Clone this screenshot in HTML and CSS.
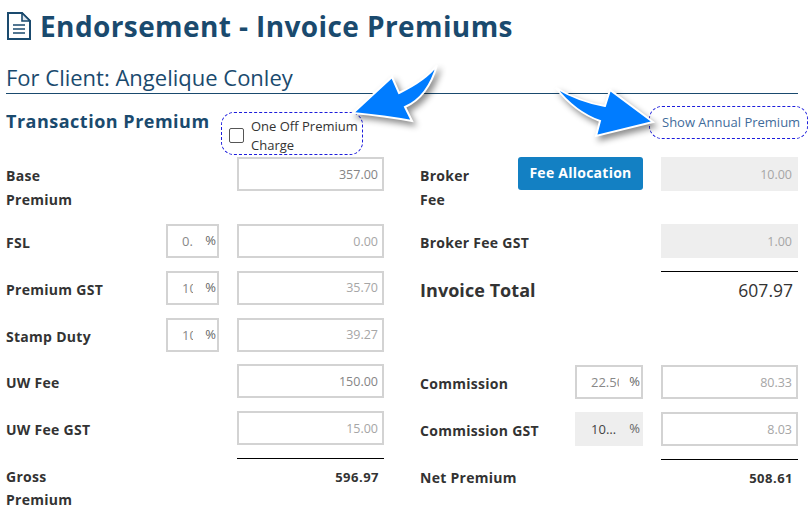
FILE: index.html
```html
<!doctype html>
<html>
<head>
    <meta charset="utf-8">
    <title>Endorsement - Invoice Premiums</title>
    <link rel="stylesheet" href="styles.css">
</head>

<body>
<div class="page">
    <h1 class="page-title">
        <svg class="doc-icon" width="24" height="28" viewBox="0 0 24 28">
            <path d="M1 1H15L23 9V27H1Z" fill="none" stroke="#1a4a6e" stroke-width="2"/>
            <path d="M15 1V9H23Z" fill="#dfe7ee" stroke="#1a4a6e" stroke-width="1.6"/>
            <path d="M6 13H18M6 17H18M6 21H18" stroke="#1a4a6e" stroke-width="1.6"/>
        </svg>
        Endorsement - Invoice Premiums
    </h1>
    <h2 class="client">For Client: Angelique Conley</h2>

    <div class="columns">
        <!-- left column -->
        <div class="col">
            <div class="section-head">
                <h3 class="section-title">Transaction Premium</h3>
                <label class="one-off">
                    <input type="checkbox" class="one-off-check">
                    <span class="one-off-text">One Off Premium Charge</span>
                </label>
            </div>

            <div class="row row-tall">
                <span class="label label-wrap">Base Premium</span>
                <input class="amount strong" value="357.00" readonly>
            </div>
            <div class="row">
                <span class="label">FSL</span>
                <span class="pct"><input value="0.00" readonly><i>%</i></span>
                <input class="amount" value="0.00" readonly>
            </div>
            <div class="row">
                <span class="label">Premium GST</span>
                <span class="pct"><input value="10.00" readonly><i>%</i></span>
                <input class="amount" value="35.70" readonly>
            </div>
            <div class="row">
                <span class="label">Stamp Duty</span>
                <span class="pct"><input value="10.00" readonly><i>%</i></span>
                <input class="amount" value="39.27" readonly>
            </div>
            <div class="row">
                <span class="label">UW Fee</span>
                <input class="amount strong" value="150.00" readonly>
            </div>
            <div class="row">
                <span class="label">UW Fee GST</span>
                <input class="amount" value="15.00" readonly>
            </div>
            <div class="row row-sum">
                <span class="label label-wrap">Gross Premium</span>
                <span class="sum">596.97</span>
            </div>
        </div>

        <!-- right column -->
        <div class="col col-right">
            <div class="section-head section-head-right">
                <a class="annual" href="#">Show Annual Premium</a>
            </div>

            <div class="row row-tall">
                <span class="label label-wrap">Broker Fee</span>
                <button class="fee-btn">Fee Allocation</button>
                <input class="amount disabled" value="10.00" readonly>
            </div>
            <div class="row">
                <span class="label">Broker Fee GST</span>
                <input class="amount disabled" value="1.00" readonly>
            </div>
            <div class="row row-total">
                <span class="total-label">Invoice Total</span>
                <span class="total-value">607.97</span>
            </div>
            <div class="row">
                <span class="label">Commission</span>
                <span class="pct"><input value="22.500" readonly><i>%</i></span>
                <input class="amount" value="80.33" readonly>
            </div>
            <div class="row">
                <span class="label">Commission GST</span>
                <span class="pct pct-disabled"><input value="10.000000" readonly><i>%</i></span>
                <input class="amount" value="8.03" readonly>
            </div>
            <div class="row row-sum">
                <span class="label">Net Premium</span>
                <span class="sum">508.61</span>
            </div>
        </div>
    </div>
</div>

<!-- callout arrows drawn over the page -->
<svg class="arrows" width="812" height="510" viewBox="0 0 812 510">
    <path class="arrow" d="M437 65Q426 80 399 93L392 77L353 113Q385 116 412 121L405 107Q428 97 437 65Z"/>
    <path class="arrow" d="M556 88Q580 102 605 106L610 90L653 122L596 136L600 121Q575 112 556 88Z"/>
</svg>
</body>
</html>
```

FILE: styles.css
```css
html, body {
    margin: 0;
    height: 100%;
    overflow: hidden;
    background: #fff;
}

body {
    font-family: "Open Sans", sans-serif;
    color: #333;
}

.page {
    padding: 0 14px 0 6px;
}

/* headings */
.page-title {
    display: flex;
    align-items: center;
    gap: 9px;
    height: 52px;
    margin: 0;
    font-size: 28px;
    font-weight: 700;
    color: #1a4a6e;
    letter-spacing: 0.4px;
}

.doc-icon {
    margin-left: 1px;
    flex: none;
}

.client {
    margin: 10px 0 0;
    height: 31px;
    line-height: 30px;
    font-size: 22px;
    font-weight: 400;
    color: #1a4a6e;
    border-bottom: 1px solid #1a4a6e;
}

/* two columns */
.columns {
    display: grid;
    grid-template-columns: 378px 378px;
    column-gap: 36px;
}

.section-head {
    display: flex;
    align-items: flex-start;
    height: 63px;
}

.section-head-right {
    justify-content: flex-end;
}

.section-title {
    margin: 15px 0 0;
    width: 215px;
    flex: none;
    font-size: 18px;
    line-height: 24px;
    font-weight: 700;
    color: #1a4a6e;
    letter-spacing: 0.5px;
}

.one-off {
    box-sizing: border-box;
    display: flex;
    align-items: center;
    width: 142px;
    height: 43px;
    margin-top: 18px;
    padding: 0 0 0 7px;
    border: 1px dashed #1c1cdc;
    border-radius: 13px;
    font-size: 13px;
    line-height: 19px;
}

.one-off-text {
    padding-top: 4px;
}

.one-off-check {
    appearance: none;
    flex: none;
    width: 15px;
    height: 15px;
    margin: 4px 7px 0 0;
    border: 1px solid #555;
    border-radius: 2px;
}

.annual {
    box-sizing: border-box;
    flex: none;
    width: 159px;
    height: 33px;
    margin: 12px -10px 0 0;
    padding-left: 12px;
    border: 1px dashed #1c1cdc;
    border-radius: 13px;
    font-size: 13px;
    line-height: 30px;
    color: #3f6c9c;
    text-decoration: none;
}

/* form rows */
.row {
    display: flex;
    align-items: flex-start;
    height: 34px;
    margin-bottom: 12.8px;
}

.row-tall {
    height: 54px;
    margin-bottom: 13px;
}

.label {
    padding-top: 7px;
    margin-right: auto;
    font-size: 14px;
    line-height: 24px;
    font-weight: 700;
    letter-spacing: 0.28px;
}

.label-wrap {
    width: 70px;
}

input {
    font-family: inherit;
    outline: 0;
}

.amount {
    box-sizing: border-box;
    flex: none;
    width: 147px;
    height: 34px;
    padding: 0 4px 0 0;
    border: 2px solid #d3d3d3;
    font-size: 12.5px;
    text-align: right;
    color: #a6a6a6;
    background: #fff;
}

.col-right .amount {
    width: 137px;
}

.amount.strong {
    color: #858585;
}

.amount.disabled {
    border-color: #eee;
    background: #eee;
}

.pct {
    position: relative;
    flex: none;
    width: 53px;
    height: 34px;
    margin-right: 18px;
}

.col-right .pct {
    width: 68px;
}

.pct input {
    box-sizing: border-box;
    width: 100%;
    height: 34px;
    padding: 0 24px 0 14px;
    border: 2px solid #d3d3d3;
    font-size: 13px;
    color: #888;
}

.col-right .pct input {
    padding-right: 22px;
}

.pct i {
    position: absolute;
    top: 8px;
    right: 3px;
    font-style: normal;
    font-size: 13px;
    line-height: 16px;
    color: #666;
}

.pct-disabled input {
    border-color: #eee;
    background: #eee;
    color: #444;
    text-overflow: ellipsis;
}

.fee-btn {
    flex: none;
    width: 125px;
    height: 33px;
    margin-right: 18px;
    padding: 0 0 2px;
    border: 0;
    border-radius: 3px;
    background: #1380c3;
    color: #fff;
    font-family: inherit;
    font-size: 14px;
    font-weight: 700;
    letter-spacing: 0.25px;
}

.row-total {
    height: 94.6px;
    margin: 0;
    position: relative;
    justify-content: space-between;
}

.row-total::before {
    content: "";
    position: absolute;
    top: 0;
    right: 0;
    width: 137px;
    border-top: 1px solid #000;
}

.total-label {
    padding-top: 5px;
    font-size: 18px;
    line-height: 28px;
    font-weight: 700;
    letter-spacing: 0.05px;
}

.total-value {
    padding: 5px 5px 0 0;
    font-size: 17.5px;
    line-height: 28px;
}

.row-sum {
    position: relative;
    justify-content: space-between;
    height: 48px;
    margin: 0;
    padding-top: 7px;
}

.row-sum::before {
    content: "";
    position: absolute;
    top: 0;
    right: 0;
    width: 147px;
    border-top: 1px solid #000;
}

.col-right .row-sum::before {
    width: 137px;
}

.row-sum .label {
    padding-top: 0;
    line-height: 23px;
}

.sum {
    padding: 0 5px 0 0;
    font-size: 13px;
    line-height: 24px;
    font-weight: 700;
    letter-spacing: 0.5px;
}

/* callouts */
.arrows {
    position: absolute;
    top: 0;
    left: 0;
    pointer-events: none;
}

.arrow {
    fill: #007cff;
    stroke: #fff;
    stroke-width: 2;
    stroke-linejoin: miter;
    filter: drop-shadow(3px 4px 3px rgba(0, 0, 0, 0.45));
}
```
